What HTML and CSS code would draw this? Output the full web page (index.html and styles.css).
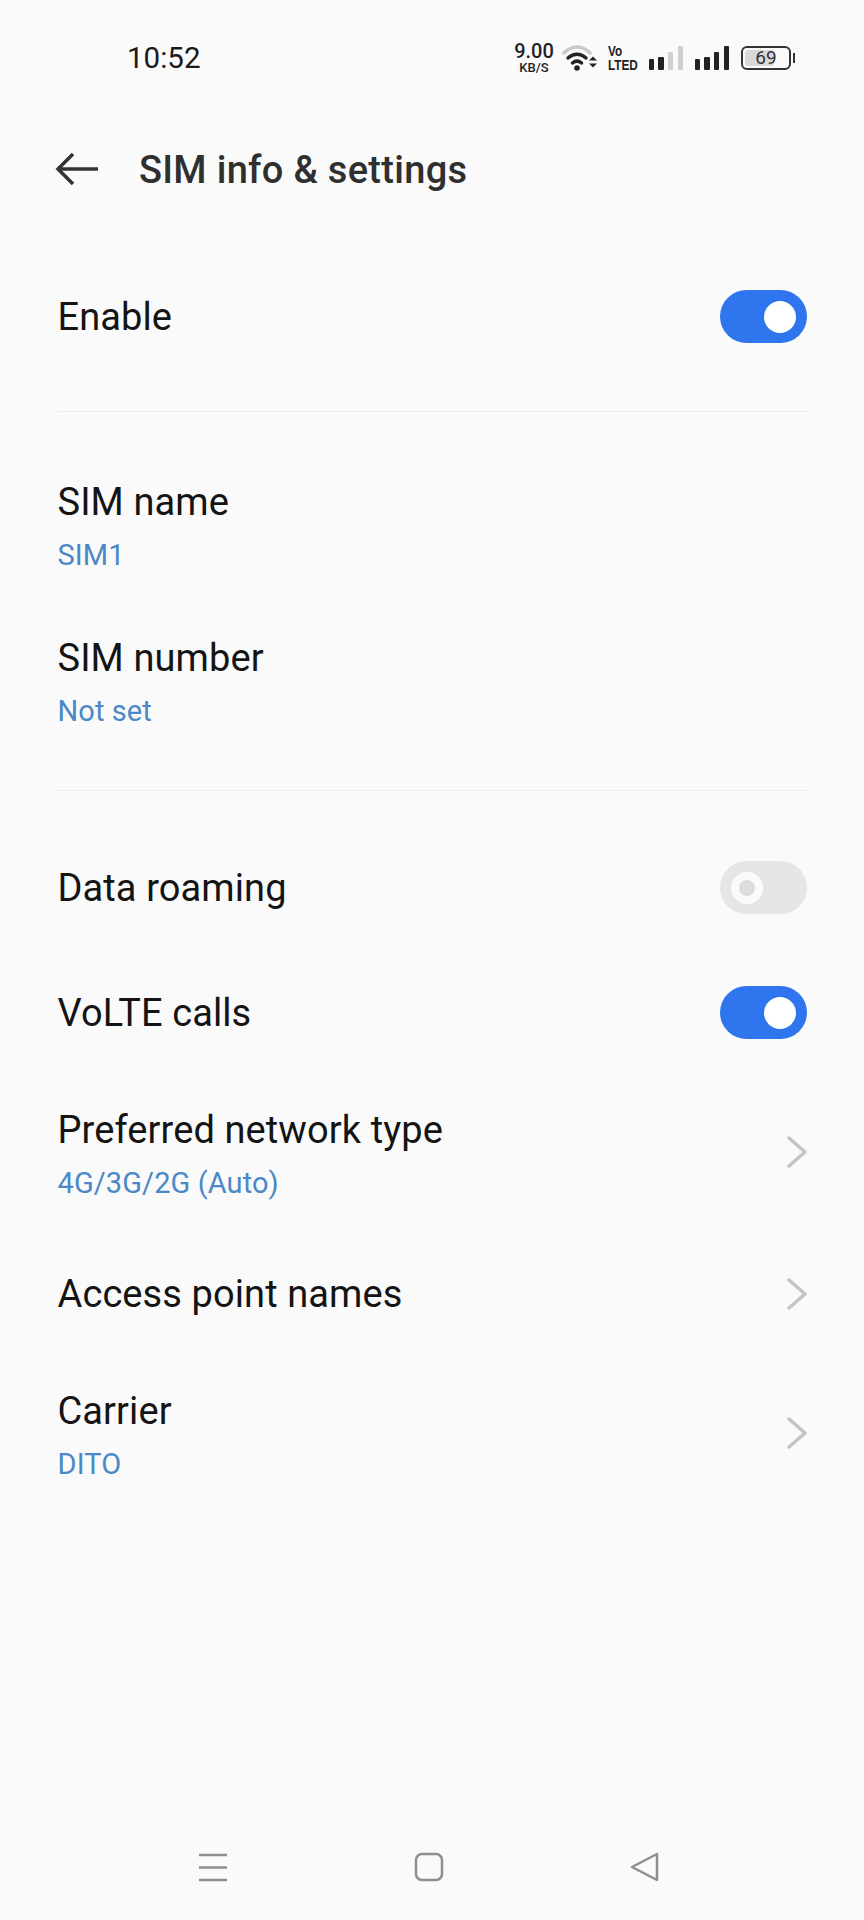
FILE: index.html
```html
<!DOCTYPE html>
<html lang="en">
  <head>
    <meta charset="UTF-8" />
    <meta name="viewport" content="width=device-width, initial-scale=1.0" />
    <title>SIM info &amp; settings</title>
    <link rel="stylesheet" href="styles.css">
  </head>
  <body>
    <div class="page">
      <div class="status-bar">
        <span class="clock">10:52</span>
        <div class="status-icons">
          <div class="net-speed">
            <span class="net-value">9.00</span>
            <span class="net-unit">KB/S</span>
          </div>
          <svg class="wifi" width="36" height="26" viewBox="0 0 36 26" fill="none" stroke-linecap="round">
            <path d="M2 8C10 0 20 0 28 8" stroke="#c9c9c9" stroke-width="3.500" />
            <path d="M6 13c6-5 12-5 18 0" stroke="#222" stroke-width="3.500" />
            <path d="M10.500 18c3-2.500 6-2.500 9 0" stroke="#222" stroke-width="3.500" />
            <circle cx="15" cy="23" r="2.800" fill="#222" />
            <path d="M27 15.500l4-4 4 4zM27 18.500h8l-4 4z" fill="#222" />
          </svg>
          <div class="volte">
            <span>Vo</span>
            <span>LTED</span>
          </div>
          <svg class="signal" width="34" height="26" viewBox="0 0 34 26">
            <rect x="0" y="14" width="5" height="11" rx="1" fill="#222" />
            <rect x="9" y="12" width="6" height="13" rx="1" fill="#222" />
            <rect x="19" y="7" width="5" height="18" rx="1" fill="#d0d0d0" />
            <rect x="29" y="1" width="5" height="24" rx="1" fill="#d0d0d0" />
          </svg>
          <svg class="signal" width="34" height="26" viewBox="0 0 34 26">
            <rect x="0" y="14" width="5" height="11" rx="1" fill="#222" />
            <rect x="9" y="12" width="6" height="13" rx="1" fill="#222" />
            <rect x="19" y="7" width="5" height="18" rx="1" fill="#222" />
            <rect x="29" y="1" width="5" height="24" rx="1" fill="#222" />
          </svg>
          <div class="battery">
            <div class="battery-body">
              <div class="battery-fill" style="width: 69%"></div>
              <span class="battery-level">69</span>
            </div>
            <div class="battery-cap"></div>
          </div>
        </div>
      </div>

      <div class="title-bar">
        <svg class="back-arrow" width="44" height="34" viewBox="0 0 44 34" fill="none" stroke="#333" stroke-width="3.500">
          <path d="M43 17H3" />
          <path d="M18 2L3 17l15 15" />
        </svg>
        <h1 class="title">SIM info &amp; settings</h1>
      </div>

      <div class="group first-group">
        <div class="row">
          <div class="row-text"><div class="row-label">Enable</div></div>
          <div class="toggle on"><div class="knob"></div></div>
        </div>
      </div>

      <div class="group middle-group">
        <div class="row tall">
          <div class="row-text">
            <div class="row-label">SIM name</div>
            <div class="row-value">SIM1</div>
          </div>
        </div>
        <div class="row tall">
          <div class="row-text">
            <div class="row-label">SIM number</div>
            <div class="row-value">Not set</div>
          </div>
        </div>
      </div>

      <div class="group last-group">
        <div class="row">
          <div class="row-text"><div class="row-label">Data roaming</div></div>
          <div class="toggle off"><div class="knob"></div></div>
        </div>
        <div class="row">
          <div class="row-text"><div class="row-label">VoLTE calls</div></div>
          <div class="toggle on"><div class="knob"></div></div>
        </div>
        <div class="row tall">
          <div class="row-text">
            <div class="row-label">Preferred network type</div>
            <div class="row-value">4G/3G/2G (Auto)</div>
          </div>
          <svg class="chevron" width="20" height="32" viewBox="0 0 20 32" fill="none"><path d="M2 2l16 14L2 30" /></svg>
        </div>
        <div class="row">
          <div class="row-text"><div class="row-label">Access point names</div></div>
          <svg class="chevron" width="20" height="32" viewBox="0 0 20 32" fill="none"><path d="M2 2l16 14L2 30" /></svg>
        </div>
        <div class="row tall">
          <div class="row-text">
            <div class="row-label">Carrier</div>
            <div class="row-value">DITO</div>
          </div>
          <svg class="chevron" width="20" height="32" viewBox="0 0 20 32" fill="none"><path d="M2 2l16 14L2 30" /></svg>
        </div>
      </div>

      <div class="nav-bar">
        <svg width="30" height="30" viewBox="0 0 30 30" fill="none" stroke="#8f8f8f" stroke-width="2.500">
          <path d="M1 3h28M1 15.500h28M1 28h28" />
        </svg>
        <svg width="30" height="30" viewBox="0 0 30 30" fill="none" stroke="#8f8f8f" stroke-width="2.500">
          <rect x="2" y="2" width="26" height="26" rx="6" />
        </svg>
        <svg width="30" height="30" viewBox="0 0 30 30" fill="none" stroke="#8f8f8f" stroke-width="2.500" stroke-linejoin="round">
          <path d="M2 15L27 2v26z" />
        </svg>
      </div>
    </div>
  </body>
</html>
```

FILE: styles.css
```css
body {
  background-color: #fafafa;
  margin: 0px;
  font-family: Roboto, sans-serif;
  color: #111;
}

.page {
  height: 1920px;
  display: flex;
  flex-direction: column;
  overflow: hidden;
}

.status-bar {
  height: 116px;
  display: flex;
  align-items: center;
  justify-content: space-between;
  padding: 0px 69px 0px 127px;
}

.clock {
  font-size: 29.5px;
  color: #1a1a1a;
}

.status-icons {
  display: flex;
  align-items: center;
}

.net-speed {
  display: flex;
  flex-direction: column;
  align-items: center;
  width: 40px;
  margin-right: 8px;
  color: #222;
}

.net-value {
  font-size: 20px;
  font-weight: 500;
  line-height: 19px;
}

.net-unit {
  font-size: 13px;
  font-weight: 500;
  line-height: 13px;
}

.wifi {
  margin-right: 10px;
}

.volte {
  display: flex;
  flex-direction: column;
  width: 29px;
  margin-right: 12px;
  font-family: "Liberation Sans", sans-serif;
  font-weight: 700;
  color: #222;
  font-size: 15.5px;
  line-height: 14px;
  transform: scaleX(0.76);
  transform-origin: left center;
}

.signal {
  margin-right: 12px;
}

.battery {
  display: flex;
  align-items: center;
}

.battery-body {
  position: relative;
  width: 50px;
  height: 24px;
  border: 2px solid #333;
  border-radius: 6px;
  box-sizing: border-box;
  padding: 2px;
}

.battery-fill {
  height: 100%;
  background-color: #d9d9d9;
  border-radius: 3px;
}

.battery-level {
  position: absolute;
  left: 0px;
  right: 0px;
  top: 0px;
  text-align: center;
  font-size: 19px;
  line-height: 20px;
  color: #333;
}

.battery-cap {
  width: 2px;
  height: 10px;
  margin-left: 2px;
  background-color: #333;
}

.title-bar {
  height: 106px;
  display: flex;
  align-items: center;
  padding-left: 55px;
}

.back-arrow {
  margin-right: 40px;
}

.title {
  margin: 0px;
  padding-top: 2px;
  font-size: 38px;
  font-weight: 500;
  letter-spacing: 0.3px;
  color: #2f2f2f;
}

.group {
  margin: 0px 57px 0px 57.5px;
  border-bottom: 1px solid #ececec;
}

.first-group {
  padding: 32px 0px;
}

.middle-group {
  padding: 36px 0px 30px;
}

.last-group {
  padding-top: 34px;
  border-bottom: none;
}

.row {
  height: 125px;
  display: flex;
  align-items: center;
  justify-content: space-between;
}

.row.tall {
  height: 156px;
}

.last-group .row.tall .row-text {
  padding-top: 2px;
}

.row-label {
  font-size: 38px;
  line-height: 44px;
  letter-spacing: 0.1px;
  color: #141414;
}

.row-value {
  margin-top: 14px;
  font-size: 29px;
  line-height: 34px;
  letter-spacing: 0.1px;
  color: #4a88c7;
}

.toggle {
  width: 87px;
  height: 53px;
  border-radius: 27px;
  display: flex;
  align-items: center;
  box-sizing: border-box;
  padding: 0px 11px;
}

.toggle.on {
  background-color: #2f76ee;
  justify-content: flex-end;
}

.toggle.off {
  background-color: #e6e6e6;
}

.knob {
  width: 32px;
  height: 32px;
  border-radius: 50%;
  background-color: #fff;
}

.toggle.off .knob {
  width: 16px;
  height: 16px;
  background-color: #dcdcdc;
  border: 8px solid #fafafa;
}

.chevron {
  stroke: #c4c4c4;
  stroke-width: 3.500;
  stroke-linecap: round;
  stroke-linejoin: round;
}

.row.tall .chevron {
  margin-bottom: 3px;
}

.nav-bar {
  margin-top: auto;
  display: flex;
  justify-content: space-between;
  padding: 0px 204px 38px 198px;
}
```
